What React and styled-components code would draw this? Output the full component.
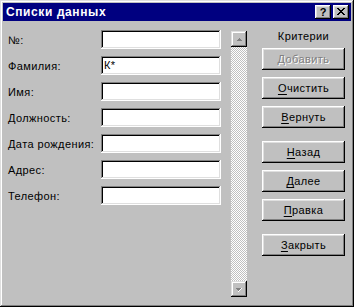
import React from "react";
import styled, { createGlobalStyle } from "styled-components";

const fields = [
  { label: "№:", value: "" },
  { label: "Фамилия:", value: "К*" },
  { label: "Имя:", value: "" },
  { label: "Должность:", value: "" },
  { label: "Дата рождения:", value: "" },
  { label: "Адрес:", value: "" },
  { label: "Телефон:", value: "" },
];

const buttons = [
  { text: "Добавить", disabled: true },
  { hot: "О", rest: "чистить" },
  { hot: "В", rest: "ернуть" },
  { hot: "Н", rest: "азад", group: true },
  { hot: "Д", rest: "алее" },
  { hot: "П", rest: "равка" },
  { hot: "З", rest: "акрыть", group: true },
];

export default function App() {
  return (
    <>
      <Global />
      <Window>
        <TitleBar>
          <Title>Списки данных</Title>
          <TitleButtons>
            <TitleButton>?</TitleButton>
            <TitleButton>
              <svg width="8" height="7" viewBox="0 0 8 7">
                <path d="M0 0h2v1h1v1h2V1h1V0h2v1H7v1H6v1H5v1h1v1h1v1h1v1H6V6H5V5H3v1H2v1H0V6h1V5h1V4h1V3H2V2H1V1H0z" fill="#000" />
              </svg>
            </TitleButton>
          </TitleButtons>
        </TitleBar>
        <Body>
          <Form>
            {fields.map((f) => (
              <React.Fragment key={f.label}>
                <Label>{f.label}</Label>
                <Field>{f.value}</Field>
              </React.Fragment>
            ))}
          </Form>
          <ScrollBar>
            <ArrowButton>
              <svg width="7" height="5" viewBox="0 0 7 5">
                <path d="M3 1h1v1h1v1h1v1H1V3h1V2h1z" fill="#808080" />
              </svg>
            </ArrowButton>
            <Track />
            <ArrowButton>
              <svg width="8" height="5" viewBox="0 0 8 5">
                <path d="M1 1h5v1H5v1H4v1H3V3H2V2H1z" fill="#808080" />
                <path d="M6 1h1v1H6v1H5v1H4v1H3V4h1V3h1V2h1z" fill="#fff" />
              </svg>
            </ArrowButton>
          </ScrollBar>
          <Side>
            <Caption>Критерии</Caption>
            {buttons.map((b, i) => (
              <Button key={i} $group={b.group} $disabled={b.disabled}>
                {b.disabled ? b.text : (<><u>{b.hot}</u>{b.rest}</>)}
              </Button>
            ))}
          </Side>
        </Body>
      </Window>
    </>
  );
}

const Global = createGlobalStyle`
  html, body {
    margin: 0;
    padding: 0;
    background: #c0c0c0;
  }
  body {
    font-family: "Liberation Sans", Arial, sans-serif;
    font-size: 11px;
  }
`;

const Window = styled.div`
  width: 354px;
  height: 307px;
  box-sizing: border-box;
  padding: 3px;
  background: #c0c0c0;
  box-shadow: inset -1px -1px #000, inset 1px 1px #dfdfdf,
    inset -2px -2px #808080, inset 2px 2px #fff;
  display: flex;
  flex-direction: column;
`;

const TitleBar = styled.div`
  height: 18px;
  background: #000080;
  display: flex;
  align-items: center;
  justify-content: space-between;
  padding: 0 2px 0 3px;
`;

const Title = styled.div`
  color: #fff;
  font-weight: bold;
  font-size: 12px;
  letter-spacing: 0.6px;
`;

const TitleButtons = styled.div`
  display: flex;
  gap: 2px;
`;

const TitleButton = styled.div`
  width: 16px;
  height: 14px;
  box-sizing: border-box;
  background: #c0c0c0;
  box-shadow: inset -1px -1px #000, inset 1px 1px #fff,
    inset -2px -2px #808080, inset 2px 2px #dfdfdf;
  display: flex;
  align-items: center;
  justify-content: center;
  font-weight: bold;
  font-size: 11px;
  color: #000;
  padding-bottom: 1px;
`;

const Body = styled.div`
  flex: 1;
  display: flex;
  align-items: flex-start;
  padding: 9px 0 0 5px;
`;

const Form = styled.div`
  display: grid;
  grid-template-columns: 93px 120px;
  grid-auto-rows: 19px;
  row-gap: 7px;
  align-items: center;
`;

const Label = styled.div`
  color: #000;
  letter-spacing: 0.4px;
  white-space: nowrap;
`;

const Field = styled.div`
  height: 19px;
  box-sizing: border-box;
  background: #fff;
  padding: 3px 3px 0;
  letter-spacing: 0.4px;
  box-shadow: inset -1px -1px #fff, inset 1px 1px #808080,
    inset -2px -2px #dfdfdf, inset 2px 2px #000;
`;

const ScrollBar = styled.div`
  width: 16px;
  height: 266px;
  margin: 1px 0 0 10px;
  display: flex;
  flex-direction: column;
`;

const ArrowButton = styled.div`
  width: 16px;
  height: 16px;
  box-sizing: border-box;
  background: #c0c0c0;
  box-shadow: inset -1px -1px #000, inset 1px 1px #dfdfdf,
    inset -2px -2px #808080, inset 2px 2px #fff;
  display: flex;
  align-items: center;
  justify-content: center;
`;

const Track = styled.div`
  flex: 1;
  background: repeating-conic-gradient(#fff 0 25%, #c0c0c0 0 50%) 0 0 / 2px 2px;
`;

const Side = styled.div`
  width: 83px;
  margin-left: 15px;
  display: flex;
  flex-direction: column;
  gap: 7px;
`;

const Caption = styled.div`
  text-align: center;
  height: 13px;
  line-height: 13px;
  margin-bottom: -2px;
  letter-spacing: 0.4px;
`;

const Button = styled.div`
  height: 22px;
  box-sizing: border-box;
  background: #c0c0c0;
  box-shadow: inset -1px -1px #000, inset 1px 1px #fff,
    inset -2px -2px #808080, inset 2px 2px #dfdfdf;
  display: flex;
  align-items: center;
  justify-content: center;
  letter-spacing: 0.4px;
  margin-top: ${({ $group }) => ($group ? "6px" : "0")};
  color: ${({ $disabled }) => ($disabled ? "#808080" : "#000")};
  text-shadow: ${({ $disabled }) => ($disabled ? "1px 1px 0 #fff" : "none")};

  u {
    text-underline-offset: 2px;
  }
`;
